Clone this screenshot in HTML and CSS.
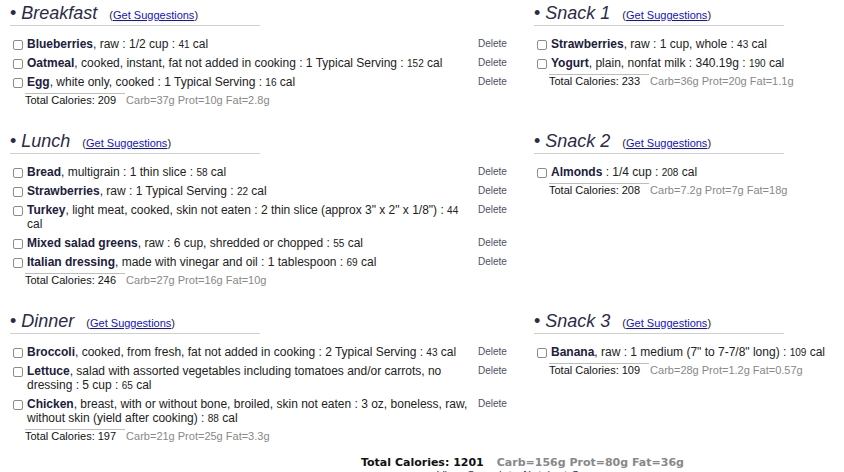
FILE: index.html
```html
<!DOCTYPE html>
<html lang="en">
<head>
<meta charset="utf-8">
<title>Food Diary</title>
<link rel="stylesheet" href="styles.css">
</head>
<body>
<div class="page">
  <div class="meals">
    <section class="meal">
      <h2 class="meal-head"><span class="bullet">&bull; </span><span class="meal-name">Breakfast</span><span class="suggest">(<a href="#">Get Suggestions</a>)</span></h2>
      <ul class="items">
        <li class="item"><input class="check" type="checkbox"><span class="desc"><b>Blueberries</b>, raw : 1/2 cup : <span class="kcal">41</span> cal</span><a class="del" href="#">Delete</a></li>
        <li class="item"><input class="check" type="checkbox"><span class="desc"><b>Oatmeal</b>, cooked, instant, fat not added in cooking : 1 Typical Serving : <span class="kcal">152</span> cal</span><a class="del" href="#">Delete</a></li>
        <li class="item"><input class="check" type="checkbox"><span class="desc"><b>Egg</b>, white only, cooked : 1 Typical Serving : <span class="kcal">16</span> cal</span><a class="del" href="#">Delete</a></li>
      </ul>
      <div class="total">Total Calories: 209<span class="macros">Carb=37g Prot=10g Fat=2.8g</span></div>
    </section>

    <section class="meal">
      <h2 class="meal-head"><span class="bullet">&bull; </span><span class="meal-name">Snack 1</span><span class="suggest">(<a href="#">Get Suggestions</a>)</span></h2>
      <ul class="items">
        <li class="item"><input class="check" type="checkbox"><span class="desc"><b>Strawberries</b>, raw : 1 cup, whole : <span class="kcal">43</span> cal</span></li>
        <li class="item"><input class="check" type="checkbox"><span class="desc"><b>Yogurt</b>, plain, nonfat milk : 340.19g : <span class="kcal">190</span> cal</span></li>
      </ul>
      <div class="total">Total Calories: 233<span class="macros">Carb=36g Prot=20g Fat=1.1g</span></div>
    </section>

    <section class="meal">
      <h2 class="meal-head"><span class="bullet">&bull; </span><span class="meal-name">Lunch</span><span class="suggest">(<a href="#">Get Suggestions</a>)</span></h2>
      <ul class="items">
        <li class="item"><input class="check" type="checkbox"><span class="desc"><b>Bread</b>, multigrain : 1 thin slice : <span class="kcal">58</span> cal</span><a class="del" href="#">Delete</a></li>
        <li class="item"><input class="check" type="checkbox"><span class="desc"><b>Strawberries</b>, raw : 1 Typical Serving : <span class="kcal">22</span> cal</span><a class="del" href="#">Delete</a></li>
        <li class="item"><input class="check" type="checkbox"><span class="desc"><b>Turkey</b>, light meat, cooked, skin not eaten : 2 thin slice (approx 3" x 2" x 1/8") : <span class="kcal">44</span> cal</span><a class="del" href="#">Delete</a></li>
        <li class="item"><input class="check" type="checkbox"><span class="desc"><b>Mixed salad greens</b>, raw : 6 cup, shredded or chopped : <span class="kcal">55</span> cal</span><a class="del" href="#">Delete</a></li>
        <li class="item"><input class="check" type="checkbox"><span class="desc"><b>Italian dressing</b>, made with vinegar and oil : 1 tablespoon : <span class="kcal">69</span> cal</span><a class="del" href="#">Delete</a></li>
      </ul>
      <div class="total">Total Calories: 246<span class="macros">Carb=27g Prot=16g Fat=10g</span></div>
    </section>

    <section class="meal">
      <h2 class="meal-head"><span class="bullet">&bull; </span><span class="meal-name">Snack 2</span><span class="suggest">(<a href="#">Get Suggestions</a>)</span></h2>
      <ul class="items">
        <li class="item"><input class="check" type="checkbox"><span class="desc"><b>Almonds</b> : 1/4 cup : <span class="kcal">208</span> cal</span></li>
      </ul>
      <div class="total">Total Calories: 208<span class="macros">Carb=7.2g Prot=7g Fat=18g</span></div>
    </section>

    <section class="meal">
      <h2 class="meal-head"><span class="bullet">&bull; </span><span class="meal-name">Dinner</span><span class="suggest">(<a href="#">Get Suggestions</a>)</span></h2>
      <ul class="items">
        <li class="item"><input class="check" type="checkbox"><span class="desc"><b>Broccoli</b>, cooked, from fresh, fat not added in cooking : 2 Typical Serving : <span class="kcal">43</span> cal</span><a class="del" href="#">Delete</a></li>
        <li class="item"><input class="check" type="checkbox"><span class="desc"><b>Lettuce</b>, salad with assorted vegetables including tomatoes and/or carrots, no dressing : 5 cup : <span class="kcal">65</span> cal</span><a class="del" href="#">Delete</a></li>
        <li class="item"><input class="check" type="checkbox"><span class="desc"><b>Chicken</b>, breast, with or without bone, broiled, skin not eaten : 3 oz, boneless, raw, without skin (yield after cooking) : <span class="kcal">88</span> cal</span><a class="del" href="#">Delete</a></li>
      </ul>
      <div class="total">Total Calories: 197<span class="macros">Carb=21g Prot=25g Fat=3.3g</span></div>
    </section>

    <section class="meal">
      <h2 class="meal-head"><span class="bullet">&bull; </span><span class="meal-name">Snack 3</span><span class="suggest">(<a href="#">Get Suggestions</a>)</span></h2>
      <ul class="items">
        <li class="item"><input class="check" type="checkbox"><span class="desc"><b>Banana</b>, raw : 1 medium (7" to 7-7/8" long) : <span class="kcal">109</span> cal</span></li>
      </ul>
      <div class="total">Total Calories: 109<span class="macros">Carb=28g Prot=1.2g Fat=0.57g</span></div>
    </section>
  </div>

  <div class="footer">
    <div class="grand">Total Calories: 1201<span class="grand-macros">Carb=156g Prot=80g Fat=36g</span></div>
    <div class="summary"><a href="#">View Complete Nutrient Summary</a></div>
  </div>
</div>
</body>
</html>
```

FILE: styles.css
```css
html, body {
  margin: 0;
  padding: 0;
  background: #fff;
  overflow: hidden;
}

body {
  font-family: "Liberation Sans", Arial, sans-serif;
  color: #222;
}

.page {
  padding: 2px 0 0 10px;
}

.meals {
  display: grid;
  grid-template-columns: 524px 1fr;
  row-gap: 23px;
  align-items: start;
}

.meal {
  min-width: 0;
}

.meal-head {
  margin: 0;
  width: 250px;
  height: 23px;
  line-height: 23px;
  font-size: 18px;
  font-weight: normal;
  color: #2b2b48;
  border-bottom: 1px solid #cfcfcf;
  white-space: nowrap;
}

.meal-name {
  font-style: italic;
}

.suggest {
  margin-left: 12px;
  font-size: 11px;
  color: #222;
}

.suggest a {
  color: #1010d0;
  text-decoration: underline;
}

.items {
  list-style: none;
  margin: 11px 0 0;
  padding: 0;
  display: flex;
  flex-direction: column;
  gap: 5px;
}

.item {
  display: flex;
  align-items: flex-start;
  font-size: 12px;
  line-height: 14px;
}

.check {
  -webkit-appearance: none;
  appearance: none;
  box-sizing: border-box;
  flex: none;
  width: 10px;
  height: 10px;
  margin: 3px 4px 0 3px;
  border: 1px solid #8c8c8c;
  border-radius: 2px;
  background: #fff;
}

.desc {
  flex: 0 1 446px;
  min-width: 0;
}

.desc b {
  color: #20203c;
}

.kcal {
  font-size: 10px;
  line-height: 10px;
}

.del {
  flex: none;
  margin-left: 5px;
  font-size: 10px;
  line-height: 14px;
  color: #4e5068;
  text-decoration: none;
}

.total {
  margin: 4px 0 0 15px;
  width: 100px;
  border-top: 1px solid #bdbdbd;
  font-size: 11px;
  line-height: 13px;
  color: #111;
  white-space: nowrap;
}

.macros {
  margin-left: 10px;
  color: #888;
}

.footer {
  margin-top: 13px;
  padding-left: 351px;
  font-family: "DejaVu Sans", Verdana, sans-serif;
  font-size: 11px;
  line-height: 13px;
  white-space: nowrap;
}

.grand {
  font-weight: bold;
  color: #111;
}

.grand-macros {
  margin-left: 13px;
  color: #888;
}

.summary {
  padding-left: 76px;
}

.summary a {
  color: #33337a;
  text-decoration: none;
}
```
